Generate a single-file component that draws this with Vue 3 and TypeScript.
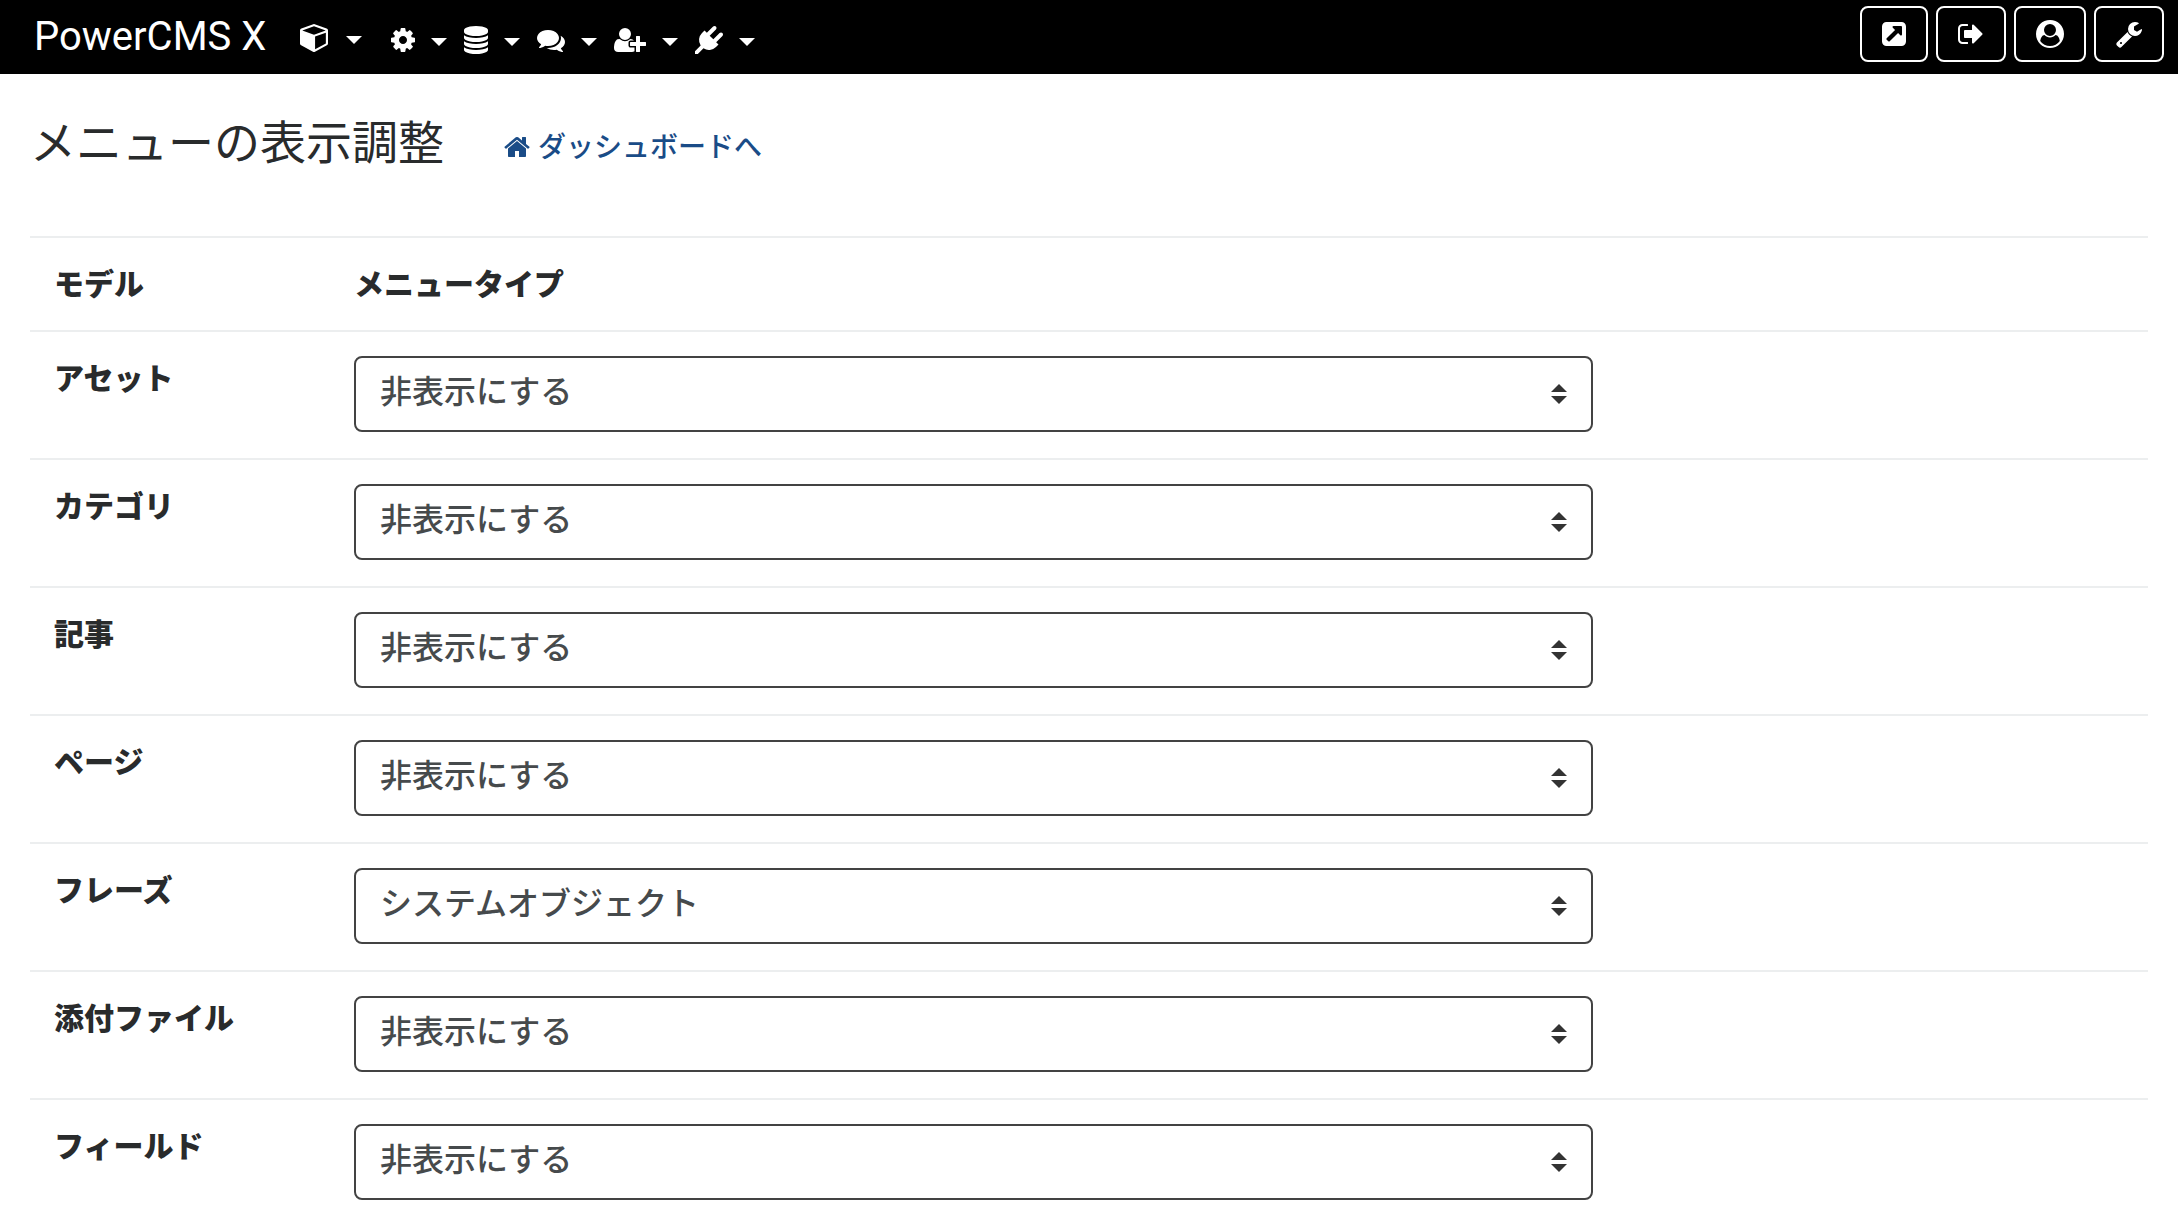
<script setup lang="ts">
import { ref } from 'vue'

interface Icon {
  name: string
  label: string
  viewBox: string
  width: number
  path: string
}

interface ModelRow {
  id: string
  label: string
  type: string
}

const navIcons: Icon[] = [
  {
    name: 'cube',
    label: 'モデル',
    viewBox: '0 128 1664 1664',
    width: 28,
    path: 'M896 1629l640-349v-636l-640 233v752zm-64-865l698-254-698-254-698 254zm832-252v768q0 35-18 65t-49 47l-704 384q-28 16-61 16t-61-16l-704-384q-31-17-49-47t-18-65v-768q0-40 23-73t61-47l704-256q22-8 44-8t44 8l704 256q38 14 61 47t23 73z',
  },
  {
    name: 'cog',
    label: 'システム',
    viewBox: '128 0 1536 1792',
    width: 24,
    path: 'M1152 896q0-106-75-181t-181-75-181 75-75 181 75 181 181 75 181-75 75-181zm512-109v222q0 12-8 23t-20 13l-185 28q-19 54-39 91 35 50 107 138 10 12 10 25t-9 23q-27 37-99 108t-94 71q-12 0-26-9l-138-108q-44 23-91 38-16 136-29 186-7 28-36 28h-222q-14 0-24.5-8.5t-11.5-21.5l-28-184q-49-16-90-37l-141 107q-10 9-25 9-14 0-25-11-126-114-165-168-7-10-7-23 0-12 8-23 15-21 51-66.5t54-70.5q-27-50-41-99l-183-27q-13-2-21-12.5t-8-23.5v-222q0-12 8-23t19-13l186-28q14-46 39-92-40-57-107-138-10-12-10-24 0-10 9-23 26-36 98.5-107.5t94.5-71.5q13 0 26 10l138 107q44-23 91-38 16-136 29-186 7-28 36-28h222q14 0 24.5 8.5t11.5 21.5l28 184q49 16 90 37l142-107q9-9 24-9 13 0 25 10 129 119 165 170 7 8 7 22 0 12-8 23-15 21-51 66.5t-54 70.5q26 50 41 98l183 28q13 2 21 12.5t8 23.5z',
  },
  {
    name: 'database',
    label: 'データベース',
    viewBox: '128 0 1536 1792',
    width: 24,
    path: 'M896 768q237 0 443-43t325-127v170q0 69-103 128t-280 93.5-385 34.5-385-34.5-280-93.5-103-128v-170q119 84 325 127t443 43zm0 768q237 0 443-43t325-127v170q0 69-103 128t-280 93.5-385 34.5-385-34.5-280-93.5-103-128v-170q119 84 325 127t443 43zm0-384q237 0 443-43t325-127v170q0 69-103 128t-280 93.5-385 34.5-385-34.5-280-93.5-103-128v-170q119 84 325 127t443 43zm0-1152q208 0 385 34.5t280 93.5 103 128v128q0 69-103 128t-280 93.5-385 34.5-385-34.5-280-93.5-103-128v-128q0-69 103-128t280-93.5 385-34.5z',
  },
  {
    name: 'comments',
    label: 'コミュニケーション',
    viewBox: '0 0 1792 1792',
    width: 28,
    path: 'M1408 768q0 139-94 257t-256.5 186.5-353.5 68.5q-86 0-176-16-124 88-278 128-36 9-86 16h-3q-11 0-20.5-8t-11.5-21q-1-3-1-6.5t.5-6.5 2-6l2.5-5 3.5-5.5 4-5 4.5-5 4-4.5q5-6 23-25t26-29.5 22.5-29 25-38.5 20.5-44q-124-72-195-177t-71-224q0-139 94-257t256.5-186.5 353.5-68.5 353.5 68.5 256.5 186.5 94 257zm384 256q0 120-71 224.5t-195 176.5q10 24 20.5 44t25 38.5 22.5 29 26 29.5 23 25q1 1 4 4.5t4.5 5 4 5 3.5 5.5l2.5 5 2 6 .5 6.5-1 6.5q-3 14-13 22t-22 7q-50-7-86-16-154-40-278-128-90 16-176 16-271 0-472-132 58 4 88 4 161 0 309-45t264-129q125-92 192-212t67-254q0-77-23-152 129 71 204 178t75 230z',
  },
  {
    name: 'user-plus',
    label: 'ユーザー',
    viewBox: '0 0 2048 1792',
    width: 32,
    path: 'M704 896q-159 0-271.5-112.5t-112.5-271.5 112.5-271.5 271.5-112.5 271.5 112.5 112.5 271.5-112.5 271.5-271.5 112.5zm960 128h352q13 0 22.5 9.5t9.5 22.5v192q0 13-9.5 22.5t-22.5 9.5h-352v352q0 13-9.5 22.5t-22.5 9.5h-192q-13 0-22.5-9.5t-9.5-22.5v-352h-352q-13 0-22.5-9.5t-9.5-22.5v-192q0-13 9.5-22.5t22.5-9.5h352v-352q0-13 9.5-22.5t22.5-9.5h192q13 0 22.5 9.5t9.5 22.5v352zm-736 224q0 52 38 90t90 38h256v238q-68 50-171 50h-874q-121 0-194-69t-73-190q0-53 3.5-103.5t14-109 26.5-108.5 43-97.5 62-81 85.5-53.5 111.5-20q19 0 39 17 79 61 154.5 91.5t164.5 30.5 164.5-30.5 154.5-91.5q20-17 39-17 132 0 217 96h-223q-52 0-90 38t-38 90v192z',
  },
  {
    name: 'plug',
    label: 'プラグイン',
    viewBox: '0 0 1792 1792',
    width: 28,
    path: 'M1755 453q37 38 37 90.5t-37 90.5l-401 400 150 150-160 160q-163 163-389.5 186.5t-411.5-100.5l-362 362h-181v-181l362-362q-124-185-100.5-411.5t186.5-389.5l160-160 150 150 400-401q38-37 91-37t90 37 37 90.5-37 90.5l-400 401 234 234 401-400q38-37 91-37t90 37z',
  },
]

const toolIcons: Icon[] = [
  {
    name: 'external-link',
    label: 'サイトを表示',
    viewBox: '128 0 1536 1792',
    width: 24,
    path: 'M1408 928v-480q0-26-19-45t-45-19h-480q-42 0-59 39-17 41 14 70l144 144-534 534q-19 19-19 45t19 45l102 102q19 19 45 19t45-19l534-534 144 144q18 19 45 19 12 0 25-5 39-17 39-59zm256-512v960q0 119-84.5 203.5t-203.5 84.5h-960q-119 0-203.5-84.5t-84.5-203.5v-960q0-119 84.5-203.5t203.5-84.5h960q119 0 203.5 84.5t84.5 203.5z',
  },
  {
    name: 'sign-out',
    label: 'ログアウト',
    viewBox: '64 0 1664 1792',
    width: 26,
    path: 'M704 1440q0 4 1 20t.5 26.5-3 23.5-10 19.5-20.5 6.5h-320q-119 0-203.5-84.5t-84.5-203.5v-704q0-119 84.5-203.5t203.5-84.5h320q13 0 22.5 9.5t9.5 22.5q0 4 1 20t.5 26.5-3 23.5-10 19.5-20.5 6.5h-320q-66 0-113 47t-47 113v704q0 66 47 113t113 47h312l11.5 1 11.5 3 8 5.5 7 9 2 13.5zm928-544q0 26-19 45l-544 544q-19 19-45 19t-45-19-19-45v-288h-448q-26 0-45-19t-19-45v-384q0-26 19-45t45-19h448v-288q0-26 19-45t45-19 45 19l544 544q19 19 19 45z',
  },
  {
    name: 'user-circle',
    label: 'プロフィール',
    viewBox: '0 0 1792 1792',
    width: 28,
    path: 'M1523 1339q-22-155-87.5-257.5t-184.5-118.5q-67 74-159.5 115.5t-195.5 41.5-195.5-41.5-159.5-115.5q-119 16-184.5 118.5t-87.5 257.5q106 150 271 237.5t356 87.5 356-87.5 271-237.5zm-243-699q0-159-112.5-271.5t-271.5-112.5-271.5 112.5-112.5 271.5 112.5 271.5 271.5 112.5 271.5-112.5 112.5-271.5zm512 256q0 182-71 347.5t-190.5 286-285.5 191.5-349 71q-182 0-348-71t-286-191-191-286-71-348 71-348 191-286 286-191 348-71 348 71 286 191 191 286 71 348z',
  },
  {
    name: 'wrench',
    label: 'ツール',
    viewBox: '64 0 1664 1792',
    width: 26,
    path: 'M448 1472q0-26-19-45t-45-19-45 19-19 45 19 45 45 19 45-19 19-45zm644-420l-682 682q-37 37-90 37-52 0-91-37l-106-108q-38-36-38-90 0-53 38-91l681-681q39 98 114.5 173.5t173.5 114.5zm634-435q0 39-23 106-47 134-164.5 217.5t-258.5 83.5q-185 0-316.5-131.5t-131.5-316.5 131.5-316.5 316.5-131.5q58 0 121.5 16.5t107.5 46.5q16 11 16 28t-16 28l-293 169v224l193 107q5-3 79-48.5t135.5-81 70.5-35.5q15 0 23.5 10t8.5 25z',
  },
]

const menuTypes: string[] = ['非表示にする', 'システムオブジェクト']

const rows = ref<ModelRow[]>([
  { id: 'asset', label: 'アセット', type: '非表示にする' },
  { id: 'category', label: 'カテゴリ', type: '非表示にする' },
  { id: 'entry', label: '記事', type: '非表示にする' },
  { id: 'page', label: 'ページ', type: '非表示にする' },
  { id: 'phrase', label: 'フレーズ', type: 'システムオブジェクト' },
  { id: 'attachment', label: '添付ファイル', type: '非表示にする' },
  { id: 'field', label: 'フィールド', type: '非表示にする' },
])
</script>

<template>
  <div class="page">
    <header class="navbar">
      <a class="brand" href="#">PowerCMS X</a>
      <nav class="menus">
        <button
          v-for="icon in navIcons"
          :key="icon.name"
          type="button"
          class="menu"
          :class="`menu-${icon.name}`"
          :aria-label="icon.label"
        >
          <svg :viewBox="icon.viewBox" :width="icon.width" height="28" aria-hidden="true">
            <path :d="icon.path" />
          </svg>
          <span class="caret"></span>
        </button>
      </nav>
      <div class="tools">
        <button
          v-for="icon in toolIcons"
          :key="icon.name"
          type="button"
          class="tool"
          :aria-label="icon.label"
        >
          <svg :viewBox="icon.viewBox" :width="icon.width" height="28" aria-hidden="true">
            <path :d="icon.path" />
          </svg>
        </button>
      </div>
    </header>

    <main class="content">
      <div class="title-bar">
        <h1>メニューの表示調整</h1>
        <a class="dashboard" href="#">
          <svg viewBox="64 128 1664 1536" width="26" height="24" aria-hidden="true">
            <path
              d="M1472 992v480q0 26-19 45t-45 19h-384v-384h-256v384h-384q-26 0-45-19t-19-45v-480q0-1 .5-3t.5-3l575-474 575 474q1 2 1 6zm223-69l-62 74q-8 9-21 11h-3q-13 0-21-7l-692-577-692 577q-12 8-24 7-13-2-21-11l-62-74q-8-10-7-23.5t11-21.5l719-599q32-26 76-26t76 26l244 204v-195q0-14 9-23t23-9h192q14 0 23 9t9 23v408l219 182q10 8 11 21.5t-7 23.5z"
            />
          </svg>
          <span>ダッシュボードへ</span>
        </a>
      </div>

      <table class="models">
        <thead>
          <tr>
            <th scope="col" class="model">モデル</th>
            <th scope="col">メニュータイプ</th>
          </tr>
        </thead>
        <tbody>
          <tr v-for="row in rows" :key="row.id">
            <th scope="row" class="model">
              <label :for="`menu-type-${row.id}`">{{ row.label }}</label>
            </th>
            <td>
              <select :id="`menu-type-${row.id}`" v-model="row.type">
                <option v-for="type in menuTypes" :key="type" :value="type">{{ type }}</option>
              </select>
            </td>
          </tr>
        </tbody>
      </table>
    </main>
  </div>
</template>

<style>
body {
  margin: 0;
  background: #fff;
}
</style>

<style scoped>
.page {
  height: 100vh;
  overflow: hidden;
  color: #292b2c;
  font-family: Inter, "Noto Sans CJK JP", sans-serif;
}

.page * {
  box-sizing: border-box;
}

svg {
  display: block;
  flex: none;
  fill: currentColor;
}

.navbar {
  display: flex;
  align-items: center;
  height: 74px;
  padding: 0 14px 0 34px;
  background: #000;
  color: #fff;
}

.brand {
  width: 266px;
  color: inherit;
  font-family: Roboto, sans-serif;
  font-size: 40px;
  line-height: 48px;
  text-decoration: none;
  white-space: nowrap;
}

.menus {
  display: flex;
  align-items: center;
  gap: 17px;
  padding-top: 6px;
}

.menu {
  display: flex;
  align-items: center;
  gap: 16px;
  padding: 0;
  border: 0;
  background: none;
  color: inherit;
}

.menu-cube {
  gap: 18px;
  margin: 0 12px 4px 0;
}

.caret {
  margin-top: 4px;
  border: 8px solid transparent;
  border-top-color: currentColor;
  border-bottom: 0;
}

.tools {
  display: flex;
  gap: 8px;
  margin: 0 0 6px auto;
}

.tool {
  padding: 12px 20px;
  border: 2px solid #fff;
  border-radius: 8px;
  background: none;
  color: inherit;
}

.content {
  padding: 40px 30px 0;
}

.title-bar {
  display: flex;
  align-items: baseline;
  gap: 60px;
  margin-bottom: 66px;
}

h1 {
  margin: 0;
  font-size: 46px;
  font-weight: 400;
  line-height: 56px;
}

.dashboard {
  display: flex;
  align-items: center;
  gap: 8px;
  color: #1a4c87;
  font-size: 28px;
  line-height: 40px;
  font-weight: 500;
  text-decoration: none;
}

.models {
  width: 100%;
  border-collapse: separate;
  border-spacing: 0;
  table-layout: fixed;
}

.models th,
.models td {
  padding: 24px;
  border-top: 2px solid #eceeef;
  font-size: 30px;
  line-height: 44px;
  text-align: left;
  vertical-align: top;
}

.models th {
  font-weight: 900;
}

.models td {
  padding-bottom: 26px;
}

.models .model {
  width: 300px;
}

select {
  display: block;
  width: 70%;
  height: 76px;
  padding: 0 72px 6px 24px;
  border: 2px solid #434343;
  border-radius: 8px;
  appearance: none;
  background: #fff
    url("data:image/svg+xml,%3Csvg xmlns='http://www.w3.org/2000/svg' viewBox='0 0 16 20'%3E%3Cpath fill='%23333' d='M0 8L8 0l8 8zM0 12h16l-8 8z'/%3E%3C/svg%3E")
    no-repeat right 24px center / 16px 20px;
  color: #464a4c;
  font-family: inherit;
  font-size: 32px;
  font-weight: 500;
}
</style>
